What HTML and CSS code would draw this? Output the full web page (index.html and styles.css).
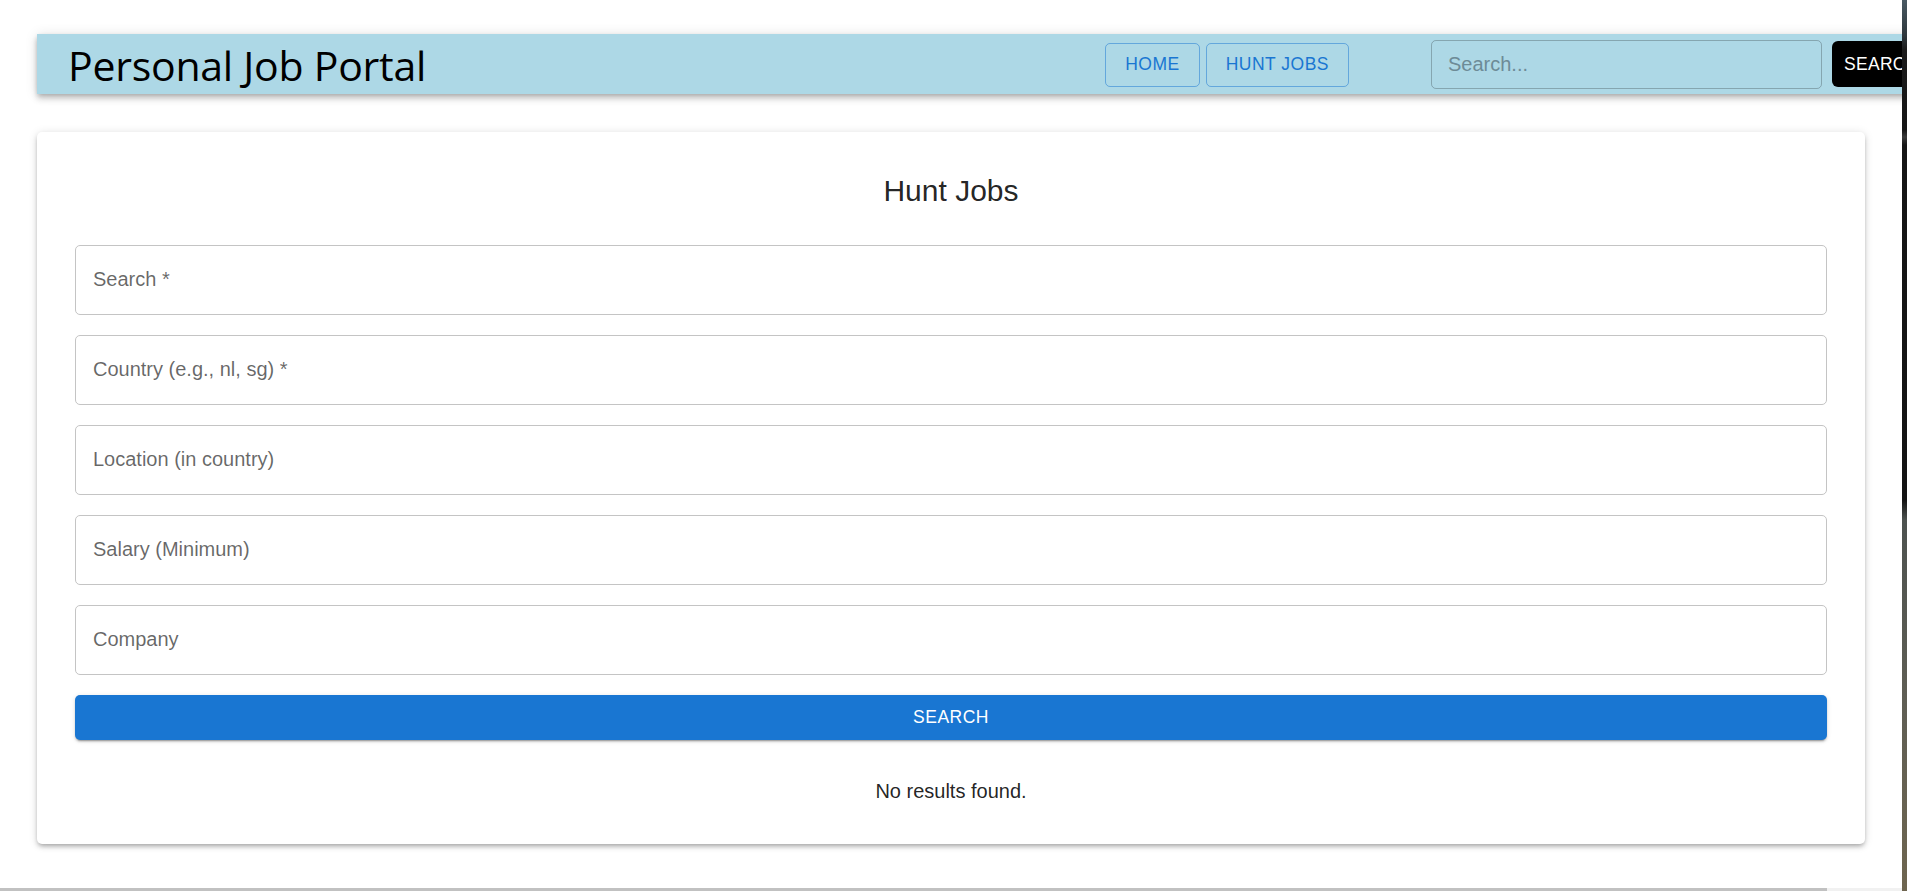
FILE: index.html
```html
<!DOCTYPE html>
<html lang="en">
<head>
<meta charset="utf-8">
<title>Personal Job Portal</title>
<link rel="stylesheet" href="styles.css">
</head>
<body>
  <div class="page">
    <header class="appbar">
      <h1 class="brand">Personal Job Portal</h1>
      <nav class="nav">
        <a class="nav-btn" href="#">HOME</a>
        <a class="nav-btn" href="#">HUNT JOBS</a>
      </nav>
      <form class="top-search">
        <input class="top-search-input" type="text" placeholder="Search...">
        <button class="top-search-btn" type="button">SEARCH</button>
      </form>
    </header>

    <main class="card">
      <h2 class="card-title">Hunt Jobs</h2>
      <div class="field"><span class="field-label">Search *</span></div>
      <div class="field"><span class="field-label">Country (e.g., nl, sg) *</span></div>
      <div class="field"><span class="field-label">Location (in country)</span></div>
      <div class="field"><span class="field-label">Salary (Minimum)</span></div>
      <div class="field"><span class="field-label">Company</span></div>
      <button class="submit" type="button">SEARCH</button>
      <p class="empty">No results found.</p>
    </main>
  </div>

  <div class="side-strip"></div>
  <div class="hscroll"><div class="hscroll-thumb"></div></div>
</body>
</html>
```

FILE: styles.css
```css
html, body {
  margin: 0;
  padding: 0;
  background: #ffffff;
  overflow: hidden;
  height: 891px;
}

body {
  font-family: "Liberation Sans", Arial, sans-serif;
  color: rgba(0, 0, 0, 0.87);
}

.page {
  padding-left: 37px;
  padding-top: 34px;
}

/* ---------- App bar ---------- */
.appbar {
  width: 1938px;
  height: 60px;
  box-sizing: border-box;
  background: #add8e6;
  display: flex;
  align-items: center;
  padding: 0 30px 0 31px;
  box-shadow: 0 2px 5px -1px rgba(0, 0, 0, 0.2),
              0 5px 6px 0 rgba(0, 0, 0, 0.14),
              0 1px 12px 0 rgba(0, 0, 0, 0.12);
  position: relative;
  z-index: 2;
}

.brand {
  margin: 0;
  font-family: "Open Sans", "Noto Sans", sans-serif;
  font-weight: 400;
  font-size: 41px;
  letter-spacing: -0.25px;
  line-height: 1;
  color: #000;
  padding-top: 3px;
}

.nav {
  margin-left: auto;
  margin-right: 82px;
  display: flex;
  gap: 6px;
}

.nav-btn {
  display: flex;
  align-items: center;
  height: 44px;
  box-sizing: border-box;
  padding: 0 19px;
  margin-top: 1px;
  border: 1px solid rgba(25, 118, 210, 0.5);
  border-radius: 5px;
  color: #1976d2;
  text-decoration: none;
  font-size: 17.5px;
  letter-spacing: 0.5px;
}

.top-search {
  display: flex;
  align-items: center;
  gap: 10px;
  margin: 0;
}

.top-search-input {
  width: 391px;
  height: 49px;
  box-sizing: border-box;
  background: transparent;
  border: 1px solid rgba(0, 0, 0, 0.23);
  border-radius: 5px;
  padding: 0 16px;
  font-family: "Liberation Sans", Arial, sans-serif;
  font-size: 20px;
  color: #000;
  outline: none;
}

.top-search-input::placeholder {
  color: #6d8b97;
  opacity: 1;
}

.top-search-btn {
  width: 113px;
  height: 46px;
  background: #000;
  color: #fff;
  border: none;
  border-radius: 6px;
  font-family: "Liberation Sans", Arial, sans-serif;
  font-size: 17.5px;
  letter-spacing: 0.3px;
  text-align: left;
  padding: 0 0 0 12px;
}

/* ---------- Card ---------- */
.card {
  width: 1828px;
  box-sizing: border-box;
  margin-top: 38px;
  padding: 39px 38px 37px;
  background: #fff;
  border-radius: 5px;
  box-shadow: 0 3px 4px -2px rgba(0, 0, 0, 0.2),
              0 3px 5px 0 rgba(0, 0, 0, 0.14),
              0 1px 10px 0 rgba(0, 0, 0, 0.12);
  display: flex;
  flex-direction: column;
}

.card-title {
  margin: 0 0 14px;
  text-align: center;
  font-size: 30px;
  font-weight: 400;
  line-height: 40px;
  color: rgba(0, 0, 0, 0.87);
}

.field {
  margin-top: 20px;
  height: 70px;
  box-sizing: border-box;
  border: 1px solid #c4c4c4;
  border-radius: 5px;
  display: flex;
  align-items: center;
  padding-left: 17px;
  padding-bottom: 2px;
}

.field-label {
  font-size: 20px;
  color: rgba(0, 0, 0, 0.6);
}

.submit {
  margin-top: 20px;
  height: 45px;
  border: none;
  border-radius: 5px;
  background: #1976d2;
  color: #fff;
  font-family: "Liberation Sans", Arial, sans-serif;
  font-size: 17.5px;
  letter-spacing: 0.5px;
  box-shadow: 0 3px 1px -2px rgba(0, 0, 0, 0.2),
              0 2px 2px 0 rgba(0, 0, 0, 0.14),
              0 1px 5px 0 rgba(0, 0, 0, 0.12);
}

.empty {
  margin: 36px 0 0;
  padding-bottom: 1px;
  text-align: center;
  font-size: 20px;
  line-height: 30px;
  color: rgba(0, 0, 0, 0.87);
}

/* ---------- window chrome overlays ---------- */
.side-strip {
  position: fixed;
  top: 0;
  right: 0;
  width: 5px;
  height: 891px;
  z-index: 5;
  background: linear-gradient(to bottom,
    #4a5a63 0px, #2e363b 36px, #1a1a1a 50px,
    #161616 130px, #3a3a3a 137px, #161616 145px,
    #141414 500px, #4d524f 520px, #5f5e54 700px, #6e654f 891px);
}

.hscroll {
  position: fixed;
  left: 0;
  bottom: 0;
  width: 1902px;
  height: 3px;
  background: #f1f1f1;
  z-index: 4;
}

.hscroll-thumb {
  width: 1827px;
  height: 3px;
  background: #c1c1c1;
}
```
